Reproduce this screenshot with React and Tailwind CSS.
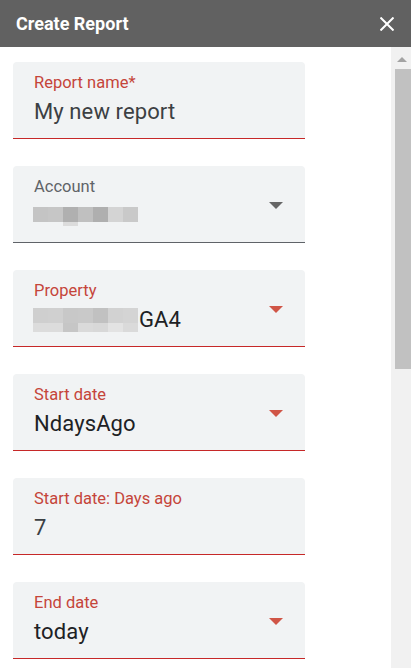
import React from "react";

const RED_LABEL = "text-[#c5453a]";

const accountBlocks = ["#c4c4c4", "#c6c6c6", "#b0b0b0", "#c0c0c0", "#afafaf", "#d4d4d4", "#c9c9c9"];
const propTop = ["#cfcfcf", "#d0d0d0", "#c8c8c8", "#c9c9c9", "#c1c1c1", "#d2d2d2", "#d4d4d4"];
const propBottom = ["#dcdcdc", "#dcdcdc", "#c6c6c6", "#dadada", "#d8d8d8", "#e3e3e3", "#dadada"];

const Arrow = ({ gray }) => (
  <svg
    width="14"
    height="7"
    viewBox="0 0 14 7"
    className="absolute right-[22px] top-[36px]"
  >
    <polygon points="0,0 14,0 7,7" fill={gray ? "#666666" : "#d05546"} />
  </svg>
);

const Field = ({ label, gray, dropdown, input, children }) => (
  <div
    className={`relative w-[292px] h-[77px] shrink-0 rounded-t-[4px] bg-[#f1f3f4] border-b ${
      gray ? "border-[#5f6368]" : "border-[#c62828]"
    } pl-[21px] pt-[11px]`}
  >
    <div className={`text-[16.5px] leading-[20px] ${gray ? "text-[#5f6368]" : RED_LABEL}`}>
      {label}
    </div>
    <div
      className={`mt-[4px] h-[29px] text-[22px] leading-[29px] tracking-[0.1px] flex items-start ${
        input ? "text-[#3c4043]" : "text-[#202124]"
      }`}
    >
      {children}
    </div>
    {dropdown && <Arrow gray={gray} />}
  </div>
);

const AccountBlur = () => (
  <div className="mt-[6px] ml-[-1px] flex">
    {accountBlocks.map((c, i) => (
      <div key={i} className="flex flex-col">
        <div className="w-[15px] h-[15px]" style={{ backgroundColor: c }} />
        {i === 2 && <div className="w-[15px] h-[4px] bg-[#dcdcdc]" />}
      </div>
    ))}
  </div>
);

const PropertyBlur = () => (
  <div className="mt-[3px] ml-[-1px] flex flex-col">
    <div className="flex">
      {propTop.map((c, i) => (
        <div key={i} className="w-[15px] h-[15px]" style={{ backgroundColor: c }} />
      ))}
    </div>
    <div className="flex">
      {propBottom.map((c, i) => (
        <div key={i} className="w-[15px] h-[9px]" style={{ backgroundColor: c }} />
      ))}
    </div>
  </div>
);

const ScrollBar = () => (
  <div className="w-[20px] h-full bg-[#f1f1f1] flex flex-col items-center">
    <svg width="10" height="5" viewBox="0 0 10 5" className="mt-[10px] ml-[1px]">
      <polygon points="5,0 10,5 0,5" fill="#a3a3a3" />
    </svg>
    <div className="mt-[7px] ml-[4px] w-[17px] h-[300px] bg-[#c1c1c1]" />
  </div>
);

export default function App() {
  return (
    <div className="w-[411px] h-[668px] overflow-hidden bg-white flex flex-col font-['Roboto',sans-serif]">
      <div className="h-[47px] shrink-0 bg-[#616161] flex items-center justify-between pl-[16px] pr-[17px]">
        <span className="text-white text-[18px] font-bold">Create Report</span>
        <svg width="14" height="14" viewBox="0 0 14 14">
          <path d="M0.5 0.5L13.5 13.5M13.5 0.5L0.5 13.5" stroke="white" strokeWidth="2" />
        </svg>
      </div>
      <div className="flex-1 flex min-h-0">
        <div className="flex-1 flex flex-col gap-[27px] pl-[13px] pt-[15px] overflow-hidden">
          <Field label="Report name*" input>My new report</Field>
          <Field label="Account" gray dropdown>
            <AccountBlur />
          </Field>
          <Field label="Property" dropdown>
            <PropertyBlur />
            <span className="ml-[1px]">GA4</span>
          </Field>
          <Field label="Start date" dropdown>NdaysAgo</Field>
          <Field label="Start date: Days ago" input>7</Field>
          <Field label="End date" dropdown>today</Field>
        </div>
        <ScrollBar />
      </div>
    </div>
  );
}
